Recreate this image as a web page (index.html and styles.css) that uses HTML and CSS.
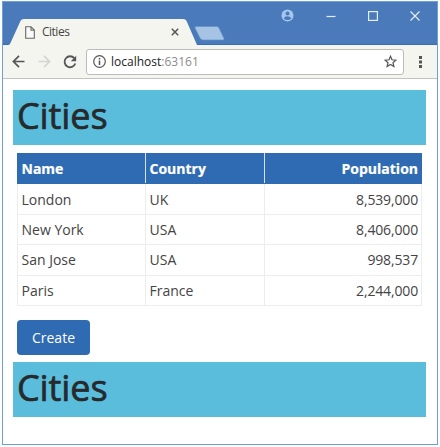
FILE: index.html
```html
<!DOCTYPE html>
<html lang="en">
<head>
<meta charset="utf-8">
<title>Cities</title>
<link rel="stylesheet" href="styles.css">
</head>
<body>
<div class="window">
  <div class="titlebar">
    <div class="tab">
      <svg class="tab-shape" width="191" height="27" viewBox="0 0 191 27"><path d="M0 27L3 25L13 3Q14 0 17 0H176Q179 0 180 3L190 26V27Z" fill="#f5f5f0"/></svg>
      <svg class="page-icon" width="10" height="13" viewBox="0 0 10 13"><path d="M.7 .7H6L9.3 4V12.3H.7ZM6 .7V4.2H9.3" fill="#fafafa" stroke="#666" stroke-width="1.1"/></svg>
      <span class="tab-title">Cities</span>
      <svg class="tab-close" width="8" height="8" viewBox="0 0 8 8"><path d="M.8 .8L7.2 7.2M7.2 .8L.8 7.2" stroke="#555" stroke-width="1.5"/></svg>
    </div>
    <svg class="new-tab" width="32" height="15" viewBox="0 0 32 15"><path d="M2 .5H23Q24.500 .5 25 2L30 12.500Q30.500 14 29 14H9Q7 14 6 12L1 2Q.5 .5 2 .5Z" fill="#a6c3e3" stroke="#5f93cc" stroke-width=".7"/></svg>
    <div class="controls">
      <svg width="13" height="13" viewBox="0 0 13 13"><circle cx="6.500" cy="6.500" r="6" fill="#a5c7ee"/><circle cx="6.500" cy="4.500" r="2" fill="#4a7aba"/><path d="M2.700 9.500Q3.500 7.300 6.500 7.300T10.300 9.500Q8.800 11 6.500 11T2.700 9.500Z" fill="#4a7aba"/></svg>
      <svg width="10" height="10" viewBox="0 0 10 10"><path d="M.5 5.500H9.500" stroke="#e2eefb" stroke-width="1.200"/></svg>
      <svg width="10" height="10" viewBox="0 0 10 10"><rect x=".6" y=".6" width="8.800" height="8.800" fill="none" stroke="#e2eefb" stroke-width="1.200"/></svg>
      <svg width="10" height="10" viewBox="0 0 10 10"><path d="M.5 .5L9.500 9.500M9.500 .5L.5 9.500" stroke="#e2eefb" stroke-width="1.200"/></svg>
    </div>
  </div>
  <div class="toolbar">
    <svg class="back" width="13" height="13" viewBox="0 0 13 13"><path d="M12.500 6.500H1.500M7 .9L1.400 6.500L7 12.100" fill="none" stroke="#555" stroke-width="1.700"/></svg>
    <svg class="forward" width="13" height="13" viewBox="0 0 13 13"><path d="M.5 6.500H11.500M6 .9L11.600 6.500L6 12.100" fill="none" stroke="#d4d4d2" stroke-width="1.700"/></svg>
    <svg class="reload" width="14" height="14" viewBox="0 0 14 14"><path d="M11.300 3.200A5.500 5.500 0 1 0 12.300 8.500" fill="none" stroke="#555" stroke-width="1.800"/><path d="M13.200 .8V6.200H7.800Z" fill="#555"/></svg>
    <div class="address">
      <svg width="13" height="13" viewBox="0 0 13 13"><circle cx="6.500" cy="6.500" r="5.800" fill="none" stroke="#555" stroke-width="1.200"/><path d="M6.500 5.600V10M6.500 3V4.500" stroke="#555" stroke-width="1.500"/></svg>
      <span class="url">localhost<span class="port">:63161</span></span>
      <svg class="star" width="13" height="13" viewBox="0 0 13 13"><path d="M6.500 1.300L8 4.800L11.900 5.200L9 7.700L9.900 11.500L6.500 9.500L3.100 11.500L4 7.700L1.100 5.200L5 4.800Z" fill="none" stroke="#555" stroke-width="1.200"/></svg>
    </div>
    <svg class="menu" width="3" height="12" viewBox="0 0 3 12"><path d="M0 0H3V3H0ZM0 4.600H3V7.400H0ZM0 9H3V12H0Z" fill="#555"/></svg>
  </div>
  <main class="page">
    <h1 class="banner">Cities</h1>
    <table class="cities">
      <colgroup><col class="name-col"><col class="country-col"><col></colgroup>
      <thead><tr><th>Name</th><th>Country</th><th class="number">Population</th></tr></thead>
      <tbody>
        <tr><td>London</td><td>UK</td><td class="number">8,539,000</td></tr>
        <tr><td>New York</td><td>USA</td><td class="number">8,406,000</td></tr>
        <tr><td>San Jose</td><td>USA</td><td class="number">998,537</td></tr>
        <tr><td>Paris</td><td>France</td><td class="number">2,244,000</td></tr>
      </tbody>
    </table>
    <a class="create">Create</a>
    <h1 class="banner">Cities</h1>
  </main>
</div>
</body>
</html>
```
FILE: styles.css
```css
* { box-sizing: border-box; }
body {
  margin: 0;
  padding: 1px 2px 2px;
  background: #fcfdfe;
  font-family: "Open Sans", "Noto Sans", sans-serif;
  color: #444;
}
svg { display: block; flex: none; }
.window {
  width: 436px;
  height: 444px;
  border: 1px solid #6f9fd8;
  background: #fff;
}
.titlebar {
  display: flex;
  height: 43px;
  background: #4a7aba;
  border-bottom: 1px solid #3a6cb2;
}
.tab {
  position: relative;
  display: flex;
  align-items: center;
  width: 191px;
  height: 26px;
  margin: 17px 0 0 4px;
  padding-left: 18px;
}
.tab-shape { position: absolute; left: 0; top: 0; }
.page-icon, .tab-title, .tab-close { position: relative; }
.tab-title {
  margin-left: 7px;
  font-size: 12px;
  line-height: 16px;
  letter-spacing: -0.5px;
}
.tab-close { margin-left: auto; margin-right: 19px; }
.new-tab { margin: 24px 0 0 -4px; }
.controls {
  display: flex;
  align-items: center;
  gap: 32px;
  height: 13px;
  margin: 7px 17px 0 auto;
}
.toolbar {
  display: flex;
  align-items: center;
  height: 34px;
  padding-left: 9px;
  background: #f5f5f0;
  border-bottom: 1px solid #c3c3c3;
}
.forward { margin-left: 13px; }
.reload { margin-left: 12px; }
.address {
  display: flex;
  align-items: center;
  width: 318px;
  height: 26px;
  margin-left: 9px;
  padding: 0 6px;
  background: #fff;
  border: 1px solid #bcbcbc;
  border-radius: 3px;
}
.url {
  margin-left: 5px;
  font-size: 12px;
  line-height: 18px;
  color: #222;
}
.port { color: #8c8c8c; }
.star { margin-left: auto; }
.menu { margin-left: 15px; }
.page { padding: 11px 11px 0 10px; }
.banner {
  height: 55px;
  margin: 0;
  padding-left: 4px;
  background: #5bbddc;
  color: #262a2c;
  font-size: 36px;
  line-height: 51px;
  font-weight: 500;
  letter-spacing: -0.1px;
  -webkit-text-stroke: 0.7px #262a2c;
}
.cities {
  width: 405px;
  margin: 8px 0 0 4px;
  border-collapse: collapse;
  table-layout: fixed;
  font-size: 14px;
  line-height: 20px;
}
.name-col { width: 128px; }
.country-col { width: 119px; }
.cities th, .cities td {
  height: 30.4px;
  padding: 1px 4px 0 3.5px;
  border: 1px solid #ededed;
  text-align: left;
}
.cities th {
  padding-top: 0;
  background: #2f6bb3;
  border-color: #2f6bb3;
  border-right-color: #d2e4f2;
  color: #fff;
  font-weight: 700;
  -webkit-text-stroke: 0.2px #fff;
}
.cities th:last-child { border-right-color: #2f6bb3; }
.cities .number { text-align: right; padding-right: 3px; }
.cities td.number { letter-spacing: -0.15px; }
.create {
  display: block;
  width: 73px;
  height: 35px;
  margin: 14px 0 7px 4px;
  border-radius: 4px;
  background: #2f6bb3;
  color: #fff;
  font-size: 14px;
  line-height: 35px;
  text-align: center;
}
```
